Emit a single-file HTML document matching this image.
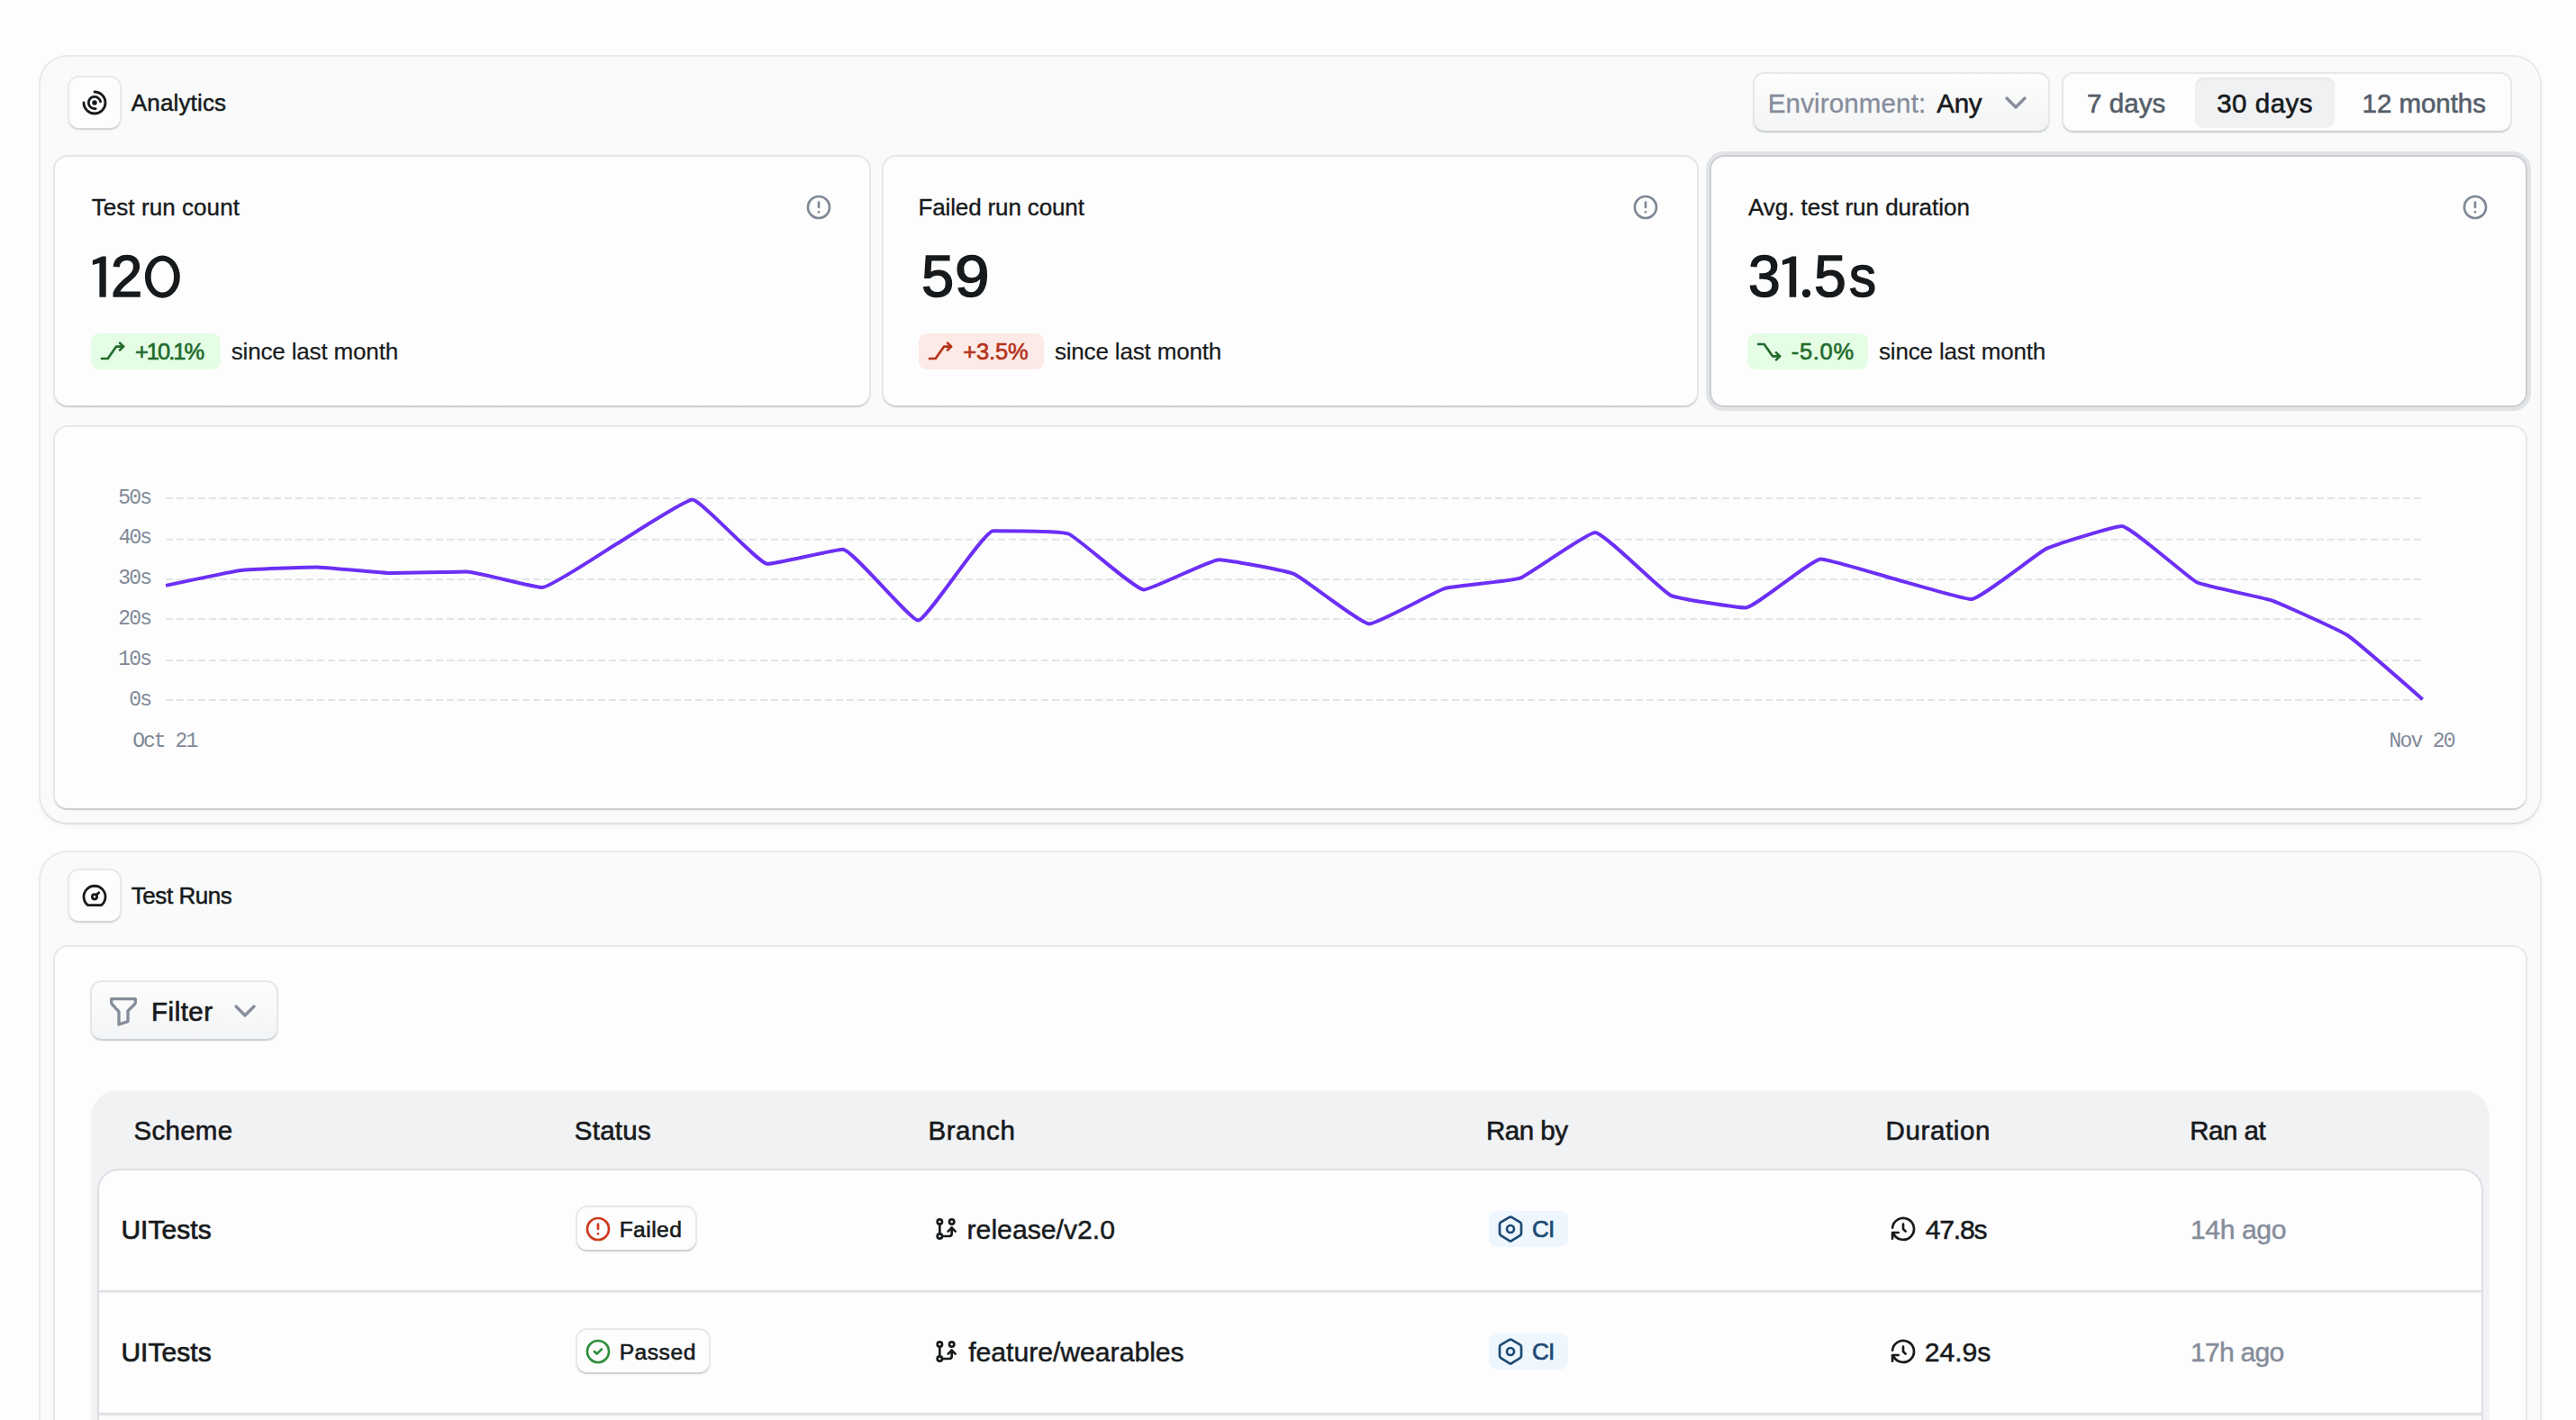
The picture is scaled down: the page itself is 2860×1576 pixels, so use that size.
<!DOCTYPE html>
<html><head><meta charset="utf-8"><title>Tests</title>
<style>
html,body{margin:0;padding:0;}
body{width:2860px;height:1576px;overflow:hidden;background:#fdfdfd;position:relative;font-family:"Liberation Sans",sans-serif;}
.b{position:absolute;box-sizing:border-box;}
.t{position:absolute;white-space:pre;font-family:"Liberation Sans",sans-serif;}
.panel{border:2px solid transparent;background:linear-gradient(#f9fafa,#f9fafa) padding-box,linear-gradient(to bottom,#e9ebeb calc(100% - 24px),#dcdedf 100%) border-box;border-radius:32px;box-shadow:0 3px 5px rgba(0,0,0,.035);}
.card{border:2px solid transparent;background:linear-gradient(#fdfdfd,#fdfdfd) padding-box,linear-gradient(to bottom,#e6e8e8 calc(100% - 12px),#cbcdcf 100%) border-box;border-radius:16px;box-shadow:0 1px 2px rgba(0,0,0,.04);}
.ring{background:linear-gradient(#fdfdfd,#fdfdfd) padding-box,linear-gradient(#c9ccd1,#c9ccd1) border-box;box-shadow:0 0 0 4px #e1e3e6;}
.ibox{border:2px solid transparent;background:linear-gradient(#fdfdfd,#fdfdfd) padding-box,linear-gradient(to bottom,#e8e9eb calc(100% - 10px),#d2d4d7 100%) border-box;border-radius:13px;box-shadow:0 1px 2px rgba(0,0,0,.05);}
.btn{border:2px solid transparent;background:linear-gradient(#fdfdfd,#f3f4f5) padding-box,linear-gradient(to bottom,#e6e7e9 calc(100% - 10px),#cccfd2 100%) border-box;border-radius:13px;box-shadow:0 1px 2px rgba(0,0,0,.06);}
.pill{border:2px solid transparent;background:linear-gradient(#fdfdfd,#fdfdfd) padding-box,linear-gradient(to bottom,#e6e8ea calc(100% - 10px),#cbced1 100%) border-box;border-radius:13px;box-shadow:0 1px 2px rgba(0,0,0,.05);}
</style></head><body>
<div class="b panel" style="left:43px;top:61px;width:2779.00px;height:854.30px;"></div>
<div class="b panel" style="left:43px;top:944.4px;width:2779.00px;height:755.60px;"></div>
<div class="b ibox" style="left:75.2px;top:83.8px;width:59.60px;height:60.20px;"></div>
<svg class="b" style="left:89px;top:98px;" width="32" height="32" viewBox="0 0 24 24" fill="none" stroke="#171a1c" stroke-width="2.1" stroke-linecap="round" stroke-linejoin="round"><path d="M12 12m-1 0a1 1 0 1 0 2 0a1 1 0 1 0 -2 0"/><path d="M16.924 11.132a5 5 0 1 0 -4.056 5.792"/><path d="M3 12a9 9 0 1 0 9 -9"/></svg>
<span class="t" style="left:145.85px;top:99.00px;font-size:26px;line-height:30px;color:#171a1c;letter-spacing:0.143px;-webkit-text-stroke:0.5px #171a1c;">Analytics</span>
<div class="b btn" style="left:1946.3px;top:79.8px;width:329.40px;height:67.50px;"></div>
<span class="t" style="left:1962.79px;top:97.60px;font-size:29.5px;line-height:33px;color:#858d9b;letter-spacing:0.144px;-webkit-text-stroke:0.3px #858d9b;">Environment:</span>
<span class="t" style="left:2150.30px;top:97.60px;font-size:29.5px;line-height:33px;color:#171a1c;letter-spacing:-0.307px;-webkit-text-stroke:0.6px #171a1c;">Any</span>
<svg class="b" style="left:2218px;top:94px;" width="40" height="40" viewBox="0 0 24 24" fill="none" stroke="#858d9b" stroke-width="2" stroke-linecap="round" stroke-linejoin="round"><path d="M6 9l6 6l6 -6"/></svg>
<div class="b pill" style="left:2288.8px;top:79.8px;width:500.50px;height:67.50px;"></div>
<div class="b" style="left:2437.2px;top:86.1px;width:154.70px;height:55.60px;background:#f0f1f3;border-radius:9px;box-shadow:inset 0 2px 2px rgba(0,0,0,.045);"></div>
<span class="t" style="left:2317.03px;top:97.60px;font-size:29.5px;line-height:33px;color:#555e69;letter-spacing:0.071px;-webkit-text-stroke:0.6px #555e69;">7 days</span>
<span class="t" style="left:2461.19px;top:97.60px;font-size:29.5px;line-height:33px;color:#171a1c;letter-spacing:0.519px;-webkit-text-stroke:0.6px #171a1c;">30 days</span>
<span class="t" style="left:2622.59px;top:97.60px;font-size:29.5px;line-height:33px;color:#555e69;letter-spacing:-0.052px;-webkit-text-stroke:0.6px #555e69;">12 months</span>
<div class="b card" style="left:59.4px;top:172.4px;width:907.40px;height:279.30px;"></div>
<span class="t" style="left:101.66px;top:215.10px;font-size:26px;line-height:30px;color:#171a1c;letter-spacing:0.071px;-webkit-text-stroke:0.35px #171a1c;">Test run count</span>
<svg class="b" style="left:892.5px;top:214px;" width="32" height="32" viewBox="0 0 24 24" fill="none" stroke="#7f8896" stroke-width="2" stroke-linecap="round" stroke-linejoin="round"><path d="M3 12a9 9 0 1 0 18 0a9 9 0 0 0 -18 0"/><path d="M12 8v4"/><path d="M12 16h.01"/></svg>
<span class="t" style="left:123.08px;top:270.40px;font-size:64.8px;line-height:73px;color:#171a1c;-webkit-text-stroke:1.5px #171a1c;transform:scaleX(0.979);transform-origin:0 0;">2</span>
<div class="b" style="left:100.8px;top:370px;width:144.30px;height:40.00px;background:#e4fde4;border-radius:9px;"></div>
<svg class="b" style="left:109px;top:374px;" width="32" height="32" viewBox="0 0 24 24" fill="none" stroke="#226b2c" stroke-width="2" stroke-linecap="round" stroke-linejoin="round"><path d="M3 18h5l7 -10h6"/><path d="M18 5l3 3l-3 3"/></svg>
<span class="t" style="left:149.89px;top:375.70px;font-size:25.5px;line-height:28px;color:#226b2c;letter-spacing:-2.001px;-webkit-text-stroke:0.6px #226b2c;">+10.1%</span>
<span class="t" style="left:256.79px;top:374.70px;font-size:26px;line-height:30px;color:#171a1c;letter-spacing:-0.167px;-webkit-text-stroke:0.2px #171a1c;">since last month</span>
<div class="b card" style="left:978.9px;top:172.4px;width:906.70px;height:279.30px;"></div>
<span class="t" style="left:1019.49px;top:215.10px;font-size:26px;line-height:30px;color:#171a1c;letter-spacing:-0.137px;-webkit-text-stroke:0.35px #171a1c;">Failed run count</span>
<svg class="b" style="left:1811.3px;top:214px;" width="32" height="32" viewBox="0 0 24 24" fill="none" stroke="#7f8896" stroke-width="2" stroke-linecap="round" stroke-linejoin="round"><path d="M3 12a9 9 0 1 0 18 0a9 9 0 0 0 -18 0"/><path d="M12 8v4"/><path d="M12 16h.01"/></svg>
<span class="t" style="left:1022.55px;top:270.40px;font-size:64.8px;line-height:73px;color:#171a1c;-webkit-text-stroke:1.5px #171a1c;transform:scaleX(1.004);transform-origin:0 0;">5</span>
<span class="t" style="left:1059.63px;top:270.40px;font-size:64.8px;line-height:73px;color:#171a1c;-webkit-text-stroke:1.5px #171a1c;transform:scaleX(1.069);transform-origin:0 0;">9</span>
<div class="b" style="left:1020.1999999999999px;top:370px;width:139.00px;height:40.00px;background:#fbeae6;border-radius:9px;"></div>
<svg class="b" style="left:1028.4px;top:374px;" width="32" height="32" viewBox="0 0 24 24" fill="none" stroke="#b5321b" stroke-width="2" stroke-linecap="round" stroke-linejoin="round"><path d="M3 18h5l7 -10h6"/><path d="M18 5l3 3l-3 3"/></svg>
<span class="t" style="left:1069.29px;top:375.70px;font-size:25.5px;line-height:28px;color:#b5321b;letter-spacing:-0.138px;-webkit-text-stroke:0.6px #b5321b;">+3.5%</span>
<span class="t" style="left:1170.88px;top:374.70px;font-size:26px;line-height:30px;color:#171a1c;letter-spacing:-0.167px;-webkit-text-stroke:0.2px #171a1c;">since last month</span>
<div class="b card ring" style="left:1897.8px;top:172.4px;width:908.20px;height:279.30px;"></div>
<span class="t" style="left:1940.97px;top:215.10px;font-size:26px;line-height:30px;color:#171a1c;letter-spacing:-0.038px;-webkit-text-stroke:0.35px #171a1c;">Avg. test run duration</span>
<svg class="b" style="left:2731.7px;top:214px;" width="32" height="32" viewBox="0 0 24 24" fill="none" stroke="#7f8896" stroke-width="2" stroke-linecap="round" stroke-linejoin="round"><path d="M3 12a9 9 0 1 0 18 0a9 9 0 0 0 -18 0"/><path d="M12 8v4"/><path d="M12 16h.01"/></svg>
<span class="t" style="left:1941.34px;top:270.40px;font-size:64.8px;line-height:73px;color:#171a1c;-webkit-text-stroke:1.5px #171a1c;transform:scaleX(0.991);transform-origin:0 0;">3</span>
<span class="t" style="left:2014.17px;top:270.40px;font-size:64.8px;line-height:73px;color:#171a1c;-webkit-text-stroke:1.5px #171a1c;transform:scaleX(0.994);transform-origin:0 0;">5</span>
<span class="t" style="left:2053.10px;top:270.40px;font-size:64.8px;line-height:73px;color:#171a1c;-webkit-text-stroke:1.5px #171a1c;transform:scaleX(0.928);transform-origin:0 0;">s</span>
<div class="b" style="left:1939.6px;top:370px;width:134.70px;height:40.00px;background:#e4fde4;border-radius:9px;"></div>
<svg class="b" style="left:1947.8px;top:374px;" width="32" height="32" viewBox="0 0 24 24" fill="none" stroke="#226b2c" stroke-width="2" stroke-linecap="round" stroke-linejoin="round"><path d="M3 6h5l7 10h6"/><path d="M18 19l3 -3l-3 -3"/></svg>
<span class="t" style="left:1988.82px;top:375.70px;font-size:25.5px;line-height:28px;color:#226b2c;letter-spacing:0.664px;-webkit-text-stroke:0.6px #226b2c;">-5.0%</span>
<span class="t" style="left:2085.98px;top:374.70px;font-size:26px;line-height:30px;color:#171a1c;letter-spacing:-0.167px;-webkit-text-stroke:0.2px #171a1c;">since last month</span>
<svg class="b" style="left:0;top:0" width="2860" height="400" viewBox="0 0 2860 400" fill="#171a1c"><polygon points="102.80,289.00 113.60,284.55 117.70,284.55 117.70,329.70 110.40,329.70 110.40,292.00 102.80,293.90"/><polygon points="1978.90,289.00 1989.99,284.55 1994.20,284.55 1994.20,329.70 1986.70,329.70 1986.70,292.00 1978.90,293.90"/><path fill-rule="evenodd" d="M160.9 307.15a19.45 23.55 0 1 0 38.9 0a19.45 23.55 0 1 0 -38.9 0zM167.65 307.15a12.7 17.3 0 1 0 25.4 0a12.7 17.3 0 1 0 -25.4 0z"/><circle cx="2005.5" cy="325.6" r="4.65"/></svg>
<div class="b card" style="left:59.4px;top:472.2px;width:2746.60px;height:427.10px;"></div>
<svg class="b" style="left:0;top:0" width="2860" height="950" viewBox="0 0 2860 950" fill="none"><line x1="184.0" y1="777.0" x2="2688.1" y2="777.0" stroke="#e2e4e7" stroke-width="2" stroke-dasharray="8 4"/><line x1="184.0" y1="732.9" x2="2688.1" y2="732.9" stroke="#e2e4e7" stroke-width="2" stroke-dasharray="8 4"/><line x1="184.0" y1="686.9" x2="2688.1" y2="686.9" stroke="#e2e4e7" stroke-width="2" stroke-dasharray="8 4"/><line x1="184.0" y1="643.0" x2="2688.1" y2="643.0" stroke="#e2e4e7" stroke-width="2" stroke-dasharray="8 4"/><line x1="184.0" y1="598.8" x2="2688.1" y2="598.8" stroke="#e2e4e7" stroke-width="2" stroke-dasharray="8 4"/><line x1="184.0" y1="553.0" x2="2688.1" y2="553.0" stroke="#e2e4e7" stroke-width="2" stroke-dasharray="8 4"/><path d="M184.10 649.90C184.10 649.90 258.34 634.14 267.62 633.00C276.72 631.88 341.96 629.40 351.14 629.40C360.34 629.40 425.46 636.10 434.66 636.10C443.83 636.10 509.09 634.50 518.18 634.50C527.47 634.50 593.09 652.00 601.70 652.00C611.46 652.00 676.03 608.66 685.22 603.30C694.41 597.94 760.13 554.60 768.74 554.60C778.51 554.60 841.91 625.80 852.26 625.80C860.28 625.80 927.96 609.70 935.78 609.70C946.34 609.70 1010.67 688.60 1019.30 688.60C1029.05 688.60 1091.64 589.20 1102.82 589.20C1110.02 589.20 1178.15 589.30 1186.34 592.50C1196.53 596.48 1260.00 654.50 1269.86 654.50C1278.38 654.50 1343.94 621.20 1353.38 621.20C1362.31 621.20 1428.46 633.50 1436.90 637.10C1446.84 641.34 1510.86 692.40 1520.42 692.40C1529.23 692.40 1594.34 656.11 1603.94 653.20C1612.71 650.54 1678.95 644.87 1687.46 641.70C1697.32 638.03 1762.28 591.00 1770.98 591.00C1780.66 591.00 1844.17 655.44 1854.50 660.60C1862.54 664.62 1929.57 674.50 1938.02 674.50C1947.95 674.50 2011.71 620.40 2021.54 620.40C2030.09 620.40 2095.86 640.54 2105.06 643.00C2114.24 645.45 2180.09 665.00 2188.58 665.00C2198.47 665.00 2262.25 613.67 2272.10 608.90C2280.63 604.76 2347.25 584.00 2355.62 584.00C2365.63 584.00 2429.07 641.32 2439.14 646.30C2447.45 650.41 2513.78 663.48 2522.66 666.60C2532.16 669.94 2597.80 699.50 2606.18 705.00C2616.18 711.56 2689.70 776.20 2689.70 776.20" stroke="#6c2ff6" stroke-width="4" stroke-linejoin="round" stroke-linecap="butt"/></svg>
<span class="t" style="left:143.22px;top:763.90px;font-size:23px;line-height:26px;color:#808a98;letter-spacing:-1.880px;font-family:'Liberation Mono', monospace;">0s</span>
<span class="t" style="left:131.19px;top:718.80px;font-size:23px;line-height:26px;color:#808a98;letter-spacing:-1.825px;font-family:'Liberation Mono', monospace;">10s</span>
<span class="t" style="left:131.19px;top:673.70px;font-size:23px;line-height:26px;color:#808a98;letter-spacing:-1.825px;font-family:'Liberation Mono', monospace;">20s</span>
<span class="t" style="left:131.36px;top:628.90px;font-size:23px;line-height:26px;color:#808a98;letter-spacing:-1.911px;font-family:'Liberation Mono', monospace;">30s</span>
<span class="t" style="left:131.65px;top:583.80px;font-size:23px;line-height:26px;color:#808a98;letter-spacing:-2.055px;font-family:'Liberation Mono', monospace;">40s</span>
<span class="t" style="left:131.36px;top:540.10px;font-size:23px;line-height:26px;color:#808a98;letter-spacing:-1.911px;font-family:'Liberation Mono', monospace;">50s</span>
<span class="t" style="left:147.16px;top:810.40px;font-size:23px;line-height:26px;color:#808a98;letter-spacing:-1.943px;font-family:'Liberation Mono', monospace;">Oct 21</span>
<span class="t" style="left:2652.47px;top:810.40px;font-size:23px;line-height:26px;color:#808a98;letter-spacing:-1.747px;font-family:'Liberation Mono', monospace;">Nov 20</span>
<div class="b ibox" style="left:75.2px;top:963.8px;width:59.60px;height:60.20px;"></div>
<svg class="b" style="left:89px;top:978px;" width="32" height="32" viewBox="0 0 24 24" fill="none" stroke="#171a1c" stroke-width="2.1" stroke-linecap="round" stroke-linejoin="round"><path d="M12 13m-2 0a2 2 0 1 0 4 0a2 2 0 1 0 -4 0"/><path d="M13.45 11.55l2.05 -2.05"/><path d="M6.4 20a9 9 0 1 1 11.2 0z"/></svg>
<span class="t" style="left:145.83px;top:978.90px;font-size:26px;line-height:30px;color:#171a1c;letter-spacing:-0.463px;-webkit-text-stroke:0.5px #171a1c;">Test Runs</span>
<div class="b card" style="left:59.4px;top:1049px;width:2746.60px;height:651.00px;"></div>
<div class="b btn" style="left:99.6px;top:1088.0px;width:209.80px;height:67.40px;"></div>
<svg class="b" style="left:117px;top:1102px;" width="40" height="40" viewBox="0 0 24 24" fill="none" stroke="#858d9b" stroke-width="2" stroke-linecap="round" stroke-linejoin="round"><path d="M4 4h16v2.172a2 2 0 0 1 -.586 1.414l-4.414 4.414v7l-6 2v-8.5l-4.48 -4.928a2 2 0 0 1 -.52 -1.345v-2.227z"/></svg>
<span class="t" style="left:168.09px;top:1105.60px;font-size:29.5px;line-height:33px;color:#171a1c;letter-spacing:0.488px;-webkit-text-stroke:0.7px #171a1c;">Filter</span>
<svg class="b" style="left:252px;top:1102px;" width="40" height="40" viewBox="0 0 24 24" fill="none" stroke="#858d9b" stroke-width="2" stroke-linecap="round" stroke-linejoin="round"><path d="M6 9l6 6l6 -6"/></svg>
<div class="b" style="left:101px;top:1210px;width:2663.00px;height:490.00px;background:#f1f2f4;border-radius:30px;"></div>
<span class="t" style="left:148.57px;top:1237.70px;font-size:29.5px;line-height:33px;color:#171a1c;letter-spacing:0.258px;-webkit-text-stroke:0.6px #171a1c;">Scheme</span>
<span class="t" style="left:637.77px;top:1237.70px;font-size:29.5px;line-height:33px;color:#171a1c;letter-spacing:0.246px;-webkit-text-stroke:0.6px #171a1c;">Status</span>
<span class="t" style="left:1030.44px;top:1237.70px;font-size:29.5px;line-height:33px;color:#171a1c;letter-spacing:0.593px;-webkit-text-stroke:0.6px #171a1c;">Branch</span>
<span class="t" style="left:1649.94px;top:1237.70px;font-size:29.5px;line-height:33px;color:#171a1c;letter-spacing:-0.476px;-webkit-text-stroke:0.6px #171a1c;">Ran by</span>
<span class="t" style="left:2093.54px;top:1237.70px;font-size:29.5px;line-height:33px;color:#171a1c;letter-spacing:0.613px;-webkit-text-stroke:0.6px #171a1c;">Duration</span>
<span class="t" style="left:2431.14px;top:1237.70px;font-size:29.5px;line-height:33px;color:#171a1c;letter-spacing:-0.454px;-webkit-text-stroke:0.6px #171a1c;">Ran at</span>
<div class="b" style="left:108px;top:1296.8px;width:2649.00px;height:403.20px;background:#fdfdfd;border:2px solid #dcdee2;border-radius:24px;"></div>
<div class="b" style="left:110px;top:1432px;width:2645.00px;height:2.00px;background:#dcdee3;"></div>
<div class="b" style="left:110px;top:1434px;width:2645.00px;height:1.20px;background:#eceef1;"></div>
<div class="b" style="left:110px;top:1568.4px;width:2645.00px;height:2.00px;background:#dcdee3;"></div>
<div class="b" style="left:110px;top:1570.4px;width:2645.00px;height:1.20px;background:#eceef1;"></div>
<span class="t" style="left:134.40px;top:1347.70px;font-size:30px;line-height:33px;color:#171a1c;letter-spacing:0.058px;-webkit-text-stroke:0.7px #171a1c;">UITests</span>
<div class="b pill" style="left:638.5px;top:1337.8999999999999px;width:135.00px;height:51.40px;"></div>
<svg class="b" style="left:648px;top:1348px;" width="32" height="32" viewBox="0 0 24 24" fill="none" stroke="#cf3a1d" stroke-width="2" stroke-linecap="round" stroke-linejoin="round"><path d="M3 12a9 9 0 1 0 18 0a9 9 0 0 0 -18 0"/><path d="M12 8v4"/><path d="M12 16h.01"/></svg>
<span class="t" style="left:687.63px;top:1350.70px;font-size:24.6px;line-height:27px;color:#171a1c;letter-spacing:0.446px;-webkit-text-stroke:0.6px #171a1c;">Failed</span>
<svg class="b" style="left:1033.7px;top:1348px;" width="32" height="32" viewBox="0 0 24 24" fill="none" stroke="#171a1c" stroke-width="2" stroke-linecap="round" stroke-linejoin="round"><path d="M7 18m-2 0a2 2 0 1 0 4 0a2 2 0 1 0 -4 0"/><path d="M7 6m-2 0a2 2 0 1 0 4 0a2 2 0 1 0 -4 0"/><path d="M17 6m-2 0a2 2 0 1 0 4 0a2 2 0 1 0 -4 0"/><path d="M7 8l0 8"/><path d="M9 18h6a2 2 0 0 0 2 -2v-5"/><path d="M14 14l3 -3l3 3"/></svg>
<span class="t" style="left:1073.56px;top:1347.70px;font-size:30.2px;line-height:33px;color:#171a1c;letter-spacing:0.003px;-webkit-text-stroke:0.45px #171a1c;">release/v2.0</span>
<div class="b" style="left:1653px;top:1344px;width:88.20px;height:40.00px;background:#eef6fe;border-radius:9px;"></div>
<svg class="b" style="left:1661px;top:1348px;" width="32" height="32" viewBox="0 0 24 24" fill="none" stroke="#1d4a73" stroke-width="2" stroke-linecap="round" stroke-linejoin="round"><path d="M19.875 6.27a2.225 2.225 0 0 1 1.125 1.948v7.284c0 .809 -.443 1.555 -1.158 1.948l-6.75 4.27a2.269 2.269 0 0 1 -2.184 0l-6.75 -4.27a2.225 2.225 0 0 1 -1.158 -1.948v-7.285c0 -.809 .443 -1.554 1.158 -1.947l6.75 -3.98a2.33 2.33 0 0 1 2.25 0l6.75 3.98h-.033z"/><path d="M12 12m-3 0a3 3 0 1 0 6 0a3 3 0 1 0 -6 0"/></svg>
<span class="t" style="left:1701.05px;top:1348.90px;font-size:26px;line-height:30px;color:#1d4a73;letter-spacing:-0.860px;-webkit-text-stroke:0.7px #1d4a73;">CI</span>
<svg class="b" style="left:2096.5px;top:1348px;" width="32" height="32" viewBox="0 0 24 24" fill="none" stroke="#171a1c" stroke-width="2" stroke-linecap="round" stroke-linejoin="round"><path d="M12 8l0 4l2 2"/><path d="M3.05 11a9 9 0 1 1 .5 4m-.5 5v-5h5"/></svg>
<span class="t" style="left:2137.67px;top:1347.70px;font-size:30.2px;line-height:33px;color:#171a1c;letter-spacing:-1.244px;-webkit-text-stroke:0.5px #171a1c;">47.8s</span>
<span class="t" style="left:2431.96px;top:1347.70px;font-size:30.2px;line-height:33px;color:#858d9b;letter-spacing:-0.429px;-webkit-text-stroke:0.45px #858d9b;">14h ago</span>
<span class="t" style="left:134.40px;top:1483.90px;font-size:30px;line-height:33px;color:#171a1c;letter-spacing:0.058px;-webkit-text-stroke:0.7px #171a1c;">UITests</span>
<div class="b pill" style="left:638.5px;top:1474.1px;width:150.80px;height:51.40px;"></div>
<svg class="b" style="left:648px;top:1484.2px;" width="32" height="32" viewBox="0 0 24 24" fill="none" stroke="#2f8d3b" stroke-width="2" stroke-linecap="round" stroke-linejoin="round"><path d="M12 12m-9 0a9 9 0 1 0 18 0a9 9 0 1 0 -18 0"/><path d="M9 12l2 2l4 -4"/></svg>
<span class="t" style="left:687.63px;top:1486.90px;font-size:24.6px;line-height:27px;color:#171a1c;letter-spacing:0.533px;-webkit-text-stroke:0.6px #171a1c;">Passed</span>
<svg class="b" style="left:1033.7px;top:1484.2px;" width="32" height="32" viewBox="0 0 24 24" fill="none" stroke="#171a1c" stroke-width="2" stroke-linecap="round" stroke-linejoin="round"><path d="M7 18m-2 0a2 2 0 1 0 4 0a2 2 0 1 0 -4 0"/><path d="M7 6m-2 0a2 2 0 1 0 4 0a2 2 0 1 0 -4 0"/><path d="M17 6m-2 0a2 2 0 1 0 4 0a2 2 0 1 0 -4 0"/><path d="M7 8l0 8"/><path d="M9 18h6a2 2 0 0 0 2 -2v-5"/><path d="M14 14l3 -3l3 3"/></svg>
<span class="t" style="left:1075.15px;top:1483.90px;font-size:30.2px;line-height:33px;color:#171a1c;letter-spacing:-0.025px;-webkit-text-stroke:0.45px #171a1c;">feature/wearables</span>
<div class="b" style="left:1653px;top:1480.2px;width:88.20px;height:40.00px;background:#eef6fe;border-radius:9px;"></div>
<svg class="b" style="left:1661px;top:1484.2px;" width="32" height="32" viewBox="0 0 24 24" fill="none" stroke="#1d4a73" stroke-width="2" stroke-linecap="round" stroke-linejoin="round"><path d="M19.875 6.27a2.225 2.225 0 0 1 1.125 1.948v7.284c0 .809 -.443 1.555 -1.158 1.948l-6.75 4.27a2.269 2.269 0 0 1 -2.184 0l-6.75 -4.27a2.225 2.225 0 0 1 -1.158 -1.948v-7.285c0 -.809 .443 -1.554 1.158 -1.947l6.75 -3.98a2.33 2.33 0 0 1 2.25 0l6.75 3.98h-.033z"/><path d="M12 12m-3 0a3 3 0 1 0 6 0a3 3 0 1 0 -6 0"/></svg>
<span class="t" style="left:1701.05px;top:1485.10px;font-size:26px;line-height:30px;color:#1d4a73;letter-spacing:-0.860px;-webkit-text-stroke:0.7px #1d4a73;">CI</span>
<svg class="b" style="left:2096.5px;top:1484.2px;" width="32" height="32" viewBox="0 0 24 24" fill="none" stroke="#171a1c" stroke-width="2" stroke-linecap="round" stroke-linejoin="round"><path d="M12 8l0 4l2 2"/><path d="M3.05 11a9 9 0 1 1 .5 4m-.5 5v-5h5"/></svg>
<span class="t" style="left:2136.84px;top:1483.90px;font-size:30.2px;line-height:33px;color:#171a1c;letter-spacing:-0.062px;-webkit-text-stroke:0.5px #171a1c;">24.9s</span>
<span class="t" style="left:2431.96px;top:1483.90px;font-size:30.2px;line-height:33px;color:#858d9b;letter-spacing:-0.812px;-webkit-text-stroke:0.45px #858d9b;">17h ago</span>
</body></html>
